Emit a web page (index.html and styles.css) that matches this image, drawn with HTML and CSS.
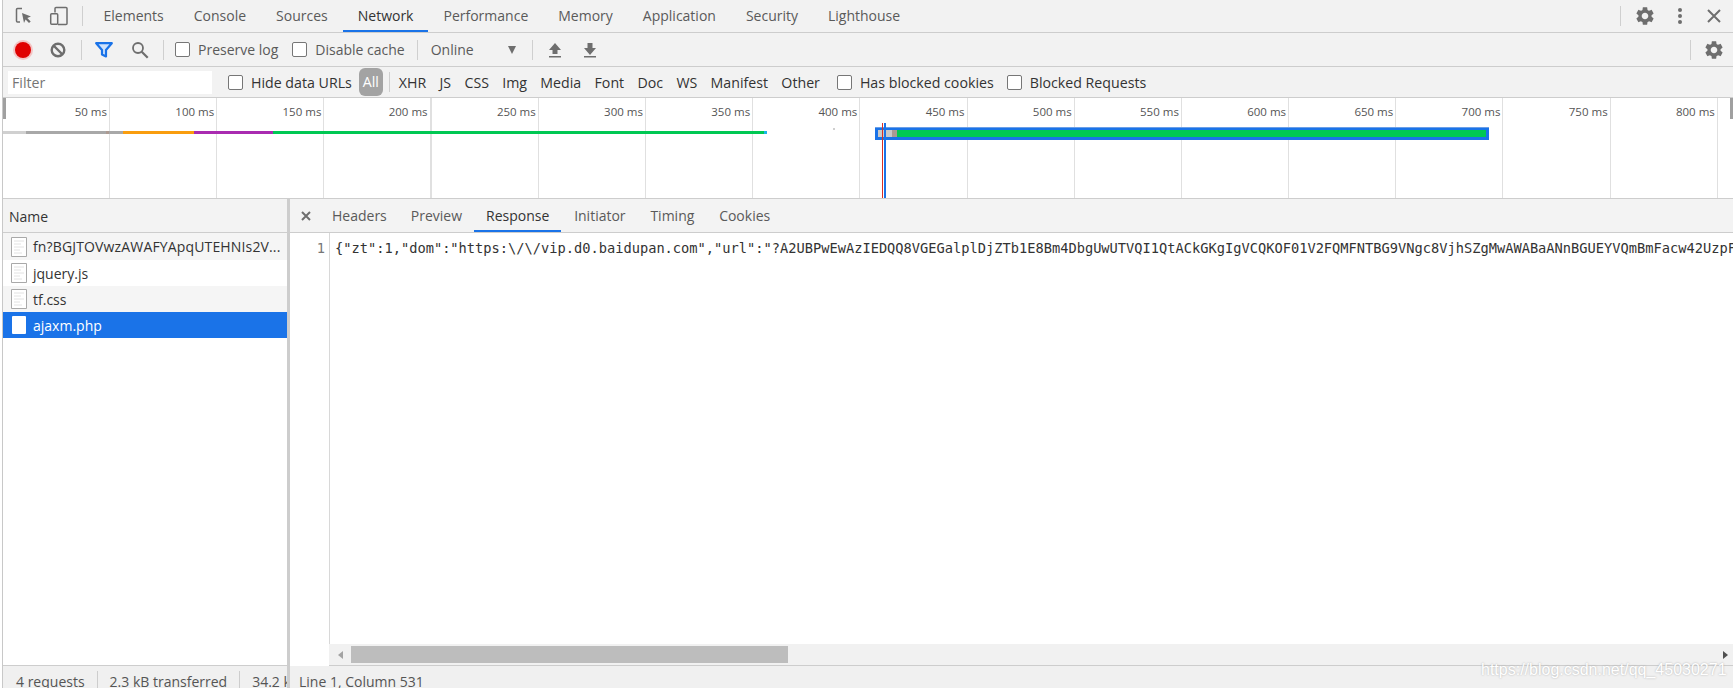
FILE: index.html
```html
<!DOCTYPE html>
<html lang="en">
<head>
	<meta charset="UTF-8">
	<title>DevTools</title>
	<link rel="stylesheet" href="styles.css">
</head>
<body>
	<svg class="defs" width="0" height="0">
		<symbol id="gear" viewBox="0 0 24 24"><path d="M19.14 12.94c.04-.3.06-.61.06-.94 0-.32-.02-.64-.07-.94l2.03-1.58c.18-.14.23-.41.12-.61l-1.92-3.32c-.12-.22-.37-.29-.59-.22l-2.39.96c-.5-.38-1.03-.7-1.62-.94l-.36-2.54c-.04-.24-.24-.41-.48-.41h-3.84c-.24 0-.43.17-.47.41l-.36 2.54c-.59.24-1.13.57-1.62.94l-2.39-.96c-.22-.08-.47 0-.59.22L2.74 8.87c-.12.21-.08.47.12.61l2.03 1.58c-.05.3-.09.63-.09.94s.02.64.07.94l-2.03 1.58c-.18.14-.23.41-.12.61l1.92 3.32c.12.22.37.29.59.22l2.39-.96c.5.38 1.03.7 1.62.94l.36 2.54c.05.24.24.41.48.41h3.84c.24 0 .44-.17.47-.41l.36-2.54c.59-.24 1.13-.56 1.62-.94l2.39.96c.22.08.47 0 .59-.22l1.92-3.32c.12-.22.07-.47-.12-.61l-2.01-1.58zM12 15.6c-1.98 0-3.6-1.62-3.6-3.6s1.62-3.6 3.6-3.6 3.6 1.62 3.6 3.6-1.62 3.6-3.6 3.6z"/></symbol>
		<symbol id="file" viewBox="0 0 16 20"><path d="M.5.5h15v19H.5z" fill="#fff" stroke="#a9a9a9"/><path d="M3 4h10M3 7h7M3 10h10M3 13h6M3 16h8" stroke="#e2e2e2"/></symbol>
	</svg>

	<div class="devtools">
		<div class="bar tabbar">
			<svg class="icon inspect" width="20" height="20" viewBox="0 0 20 20"><path d="M8 2.5H3.5a1 1 0 0 0-1 1V15a1 1 0 0 0 1 1H6" fill="none" stroke="#6e6e6e" stroke-width="1.5"/><path d="M8 7l9 3.6-3.7 1.3 3.4 3.6-1.7 1.6-3.4-3.6L10 17z" fill="#6e6e6e"/></svg>
			<svg class="icon device" width="20" height="20" viewBox="0 0 20 20"><path d="M6 6.5V2.5a1 1 0 0 1 1-1h10a1 1 0 0 1 1 1v15a1 1 0 0 1-1 1H9" fill="none" stroke="#6e6e6e" stroke-width="1.5"/><rect x="1.7" y="7.7" width="7" height="10.6" rx="1" fill="none" stroke="#6e6e6e" stroke-width="1.5"/></svg>
			<span class="divider top-div"></span>
			<div class="tabs">
				<span class="tab">Elements</span>
				<span class="tab">Console</span>
				<span class="tab">Sources</span>
				<span class="tab active">Network</span>
				<span class="tab">Performance</span>
				<span class="tab">Memory</span>
				<span class="tab">Application</span>
				<span class="tab">Security</span>
				<span class="tab">Lighthouse</span>
			</div>
			<div class="right-tools">
				<span class="divider"></span>
				<svg class="gear" width="22" height="22"><use href="#gear"/></svg>
				<svg class="dots" width="6" height="18" viewBox="0 0 6 18"><circle cx="3" cy="3" r="2"/><circle cx="3" cy="9" r="2"/><circle cx="3" cy="15" r="2"/></svg>
				<svg class="close-x" width="14" height="14" viewBox="0 0 14 14"><path d="M1 1l12 12M13 1L1 13" stroke="#6e6e6e" stroke-width="2"/></svg>
			</div>
		</div>

		<div class="bar toolbar">
			<span class="record"></span>
			<svg class="clear" width="16" height="16" viewBox="0 0 16 16"><circle cx="8" cy="8" r="6.3" fill="none" stroke="#6e6e6e" stroke-width="2.4"/><path d="M3.5 3.5l9 9" stroke="#6e6e6e" stroke-width="2.4"/></svg>
			<span class="divider d1"></span>
			<svg class="funnel" width="18" height="16" viewBox="0 0 18 16"><path d="M1.2 1.2h15.6L11 8v6.5L7 12.5V8z" fill="#cfe2fb" stroke="#1a73e8" stroke-width="2.2" stroke-linejoin="round"/></svg>
			<svg class="search" width="18" height="18" viewBox="0 0 18 18"><circle cx="7" cy="7" r="5" fill="none" stroke="#6e6e6e" stroke-width="1.8"/><path d="M10.7 10.7l6 6" stroke="#6e6e6e" stroke-width="2.2"/></svg>
			<span class="divider d2"></span>
			<label class="check preserve"><span class="box"></span>Preserve log</label>
			<label class="check cache"><span class="box"></span>Disable cache</label>
			<span class="divider d3"></span>
			<span class="online">Online</span>
			<span class="caret"></span>
			<span class="divider d4"></span>
			<svg class="arrow up" width="14" height="16" viewBox="0 0 14 16"><path d="M7 1l6 7H9.5v4h-5V8H1zM1 14h12v1.6H1z" fill="#6e6e6e"/></svg>
			<svg class="arrow down" width="14" height="16" viewBox="0 0 14 16"><path d="M4.5 1h5v5H13l-6 7-6-7h3.5zM1 14h12v1.6H1z" fill="#6e6e6e"/></svg>
			<div class="right-tools">
				<span class="divider"></span>
				<svg class="gear" width="22" height="22"><use href="#gear"/></svg>
			</div>
		</div>

		<div class="bar filterbar">
			<span class="filter-input">Filter</span>
			<label class="check hide-urls"><span class="box"></span>Hide data URLs</label>
			<span class="type-all">All</span>
			<span class="divider d5"></span>
			<span class="type">XHR</span>
			<span class="type">JS</span>
			<span class="type">CSS</span>
			<span class="type">Img</span>
			<span class="type">Media</span>
			<span class="type">Font</span>
			<span class="type">Doc</span>
			<span class="type">WS</span>
			<span class="type">Manifest</span>
			<span class="type">Other</span>
			<label class="check blocked-c"><span class="box"></span>Has blocked cookies</label>
			<label class="check blocked-r"><span class="box"></span>Blocked Requests</label>
		</div>

		<div class="timeline">
			<div class="grid">
				<div class="cell">50 ms</div>
				<div class="cell">100 ms</div>
				<div class="cell">150 ms</div>
				<div class="cell">200 ms</div>
				<div class="cell">250 ms</div>
				<div class="cell">300 ms</div>
				<div class="cell">350 ms</div>
				<div class="cell">400 ms</div>
				<div class="cell">450 ms</div>
				<div class="cell">500 ms</div>
				<div class="cell">550 ms</div>
				<div class="cell">600 ms</div>
				<div class="cell">650 ms</div>
				<div class="cell">700 ms</div>
				<div class="cell">750 ms</div>
				<div class="cell">800 ms</div>
			</div>
			<span class="handle left"></span>
			<span class="handle right"></span>
			<span class="seg s-light"></span>
			<span class="seg s-gray"></span>
			<span class="seg s-brown"></span>
			<span class="seg s-gray2"></span>
			<span class="seg s-orange"></span>
			<span class="seg s-purple"></span>
			<span class="seg s-green"></span>
			<span class="seg s-cyan"></span>
			<span class="speck"></span>
			<div class="selected">
				<span class="sel-light"></span>
				<span class="sel-brown"></span>
				<span class="sel-green"></span>
			</div>
			<span class="mark red"></span>
			<span class="mark blue"></span>
		</div>

		<div class="main">
			<div class="left-panel">
				<div class="name-head">Name</div>
				<div class="rows">
					<div class="row first odd"><svg class="file" width="16" height="20"><use href="#file"/></svg><span class="row-name">fn?BGJTOVwzAWAFYApqUTEHNIs2V...</span></div>
					<div class="row"><svg class="file" width="16" height="20"><use href="#file"/></svg><span class="row-name">jquery.js</span></div>
					<div class="row odd"><svg class="file" width="16" height="20"><use href="#file"/></svg><span class="row-name">tf.css</span></div>
					<div class="row picked"><span class="file-white"></span><span class="row-name">ajaxm.php</span></div>
				</div>
				<div class="status">
					<span class="stat">4 requests</span>
					<span class="stat">2.3 kB transferred</span>
					<span class="stat">34.2 k</span>
				</div>
			</div>
			<div class="right-panel">
				<div class="detail-tabs">
					<svg class="detail-x" width="10" height="10" viewBox="0 0 10 10"><path d="M1 1l8 8M9 1L1 9" stroke="#6e6e6e" stroke-width="2"/></svg>
					<span class="dtab">Headers</span>
					<span class="dtab">Preview</span>
					<span class="dtab active">Response</span>
					<span class="dtab">Initiator</span>
					<span class="dtab">Timing</span>
					<span class="dtab">Cookies</span>
				</div>
				<div class="code">
					<div class="gutter">1</div>
					<div class="source">{"zt":1,"dom":"https:\/\/vip.d0.baidupan.com","url":"?A2UBPwEwAzIEDQQ8VGEGalplDjZTb1E8Bm4DbgUwUTVQI1QtACkGKgIgVCQKOF01V2FQMFNTBG9VNgc8VjhSZgMwAWABaANnBGUEYVQmBmFacw42UzpF</div>
				</div>
				<div class="hscroll">
					<span class="sb-left"></span>
					<span class="sb-thumb"></span>
					<span class="sb-right"></span>
				</div>
				<div class="status pos">Line 1, Column 531</div>
			</div>
		</div>

		<div class="watermark">https://blog.csdn.net/qq_45030271</div>
	</div>
</body>
</html>
```

FILE: styles.css
```css
* { box-sizing: border-box; }
html, body { margin: 0; padding: 0; background: #fff; }
body { width: 1733px; height: 688px; overflow: hidden; font-family: "Open Sans", "Noto Sans", sans-serif; font-size: 14px; color: #444; }
.defs { position: absolute; }
svg { display: block; flex: none; }

.devtools { position: relative; width: 1733px; height: 688px; padding-left: 3px; display: flex; flex-direction: column; overflow: hidden; }
.devtools::before { content: ""; position: absolute; left: 2px; top: 0; bottom: 0; width: 1px; background: #c8c8c8; }

.bar { display: flex; align-items: center; background: #f2f2f2; border-bottom: 1px solid #cdcdcd; flex: none; }
.divider { display: block; width: 1px; height: 20px; background: #cfcfcf; flex: none; }
.right-tools { margin-left: auto; display: flex; align-items: center; }

/* main tabs */
.tabbar { height: 33px; }
.inspect { margin-left: 11px; }
.device { margin-left: 15px; }
.top-div { margin-left: 13px; }
.tabs { display: flex; height: 32px; margin-left: 5.5px; }
.tab { padding: 0 15px; line-height: 32px; color: #5a5a5a; }
.tab.active { color: #333; border-bottom: 2px solid #1a73e8; }
.tabbar .right-tools { padding-right: 12px; }
.tabbar .gear { margin-left: 13px; fill: #6e6e6e; }
.dots { margin-left: 21px; fill: #6e6e6e; }
.close-x { margin-left: 24px; }

/* toolbar */
.toolbar { height: 34px; }
.record { width: 16px; height: 16px; margin-left: 12px; border-radius: 50%; background: #e00000; box-shadow: 0 0 0 2px #f3c4c4; }
.clear { margin-left: 19px; }
.d1 { margin-left: 15px; }
.funnel { margin-left: 13px; }
.search { margin-left: 18px; }
.d2 { margin-left: 14px; }
.check { display: flex; align-items: center; color: #5a5a5a; }
.box { width: 15px; height: 15px; margin-right: 8px; background: #fff; border: 1px solid #767676; border-radius: 2px; flex: none; }
.preserve { margin-left: 11px; }
.cache { margin-left: 14px; }
.d3 { margin-left: 12px; }
.online { margin-left: 13px; color: #5a5a5a; }
.caret { margin-left: 34px; width: 0; height: 0; border-left: 4.5px solid transparent; border-right: 4.5px solid transparent; border-top: 8px solid #6e6e6e; }
.d4 { margin-left: 16px; }
.up { margin-left: 15px; }
.down { margin-left: 21px; }
.toolbar .right-tools { padding-right: 8px; }
.toolbar .gear { margin-left: 12px; fill: #6e6e6e; }

/* filter row */
.filterbar { height: 31px; color: #333; font-size: 14.2px; }
.filter-input { width: 204px; height: 23px; margin-left: 5px; padding-left: 4px; line-height: 23px; background: #fff; color: #757575; }
.hide-urls { margin-left: 16px; color: #333; }
.type-all { width: 24px; height: 28px; margin-left: 7px; line-height: 28px; text-align: center; background: #a3a3a3; border-radius: 6px; color: #fff; }
.d5 { margin-left: 6px; }
.type { margin-left: 13.3px; color: #333; }
.d5 + .type { margin-left: 9px; }
.blocked-c { margin-left: 17px; color: #333; }
.blocked-r { margin-left: 13px; color: #333; }

/* overview */
.timeline { position: relative; height: 101px; flex: none; background: #fff; border-bottom: 1px solid #cdcdcd; }
.grid { display: grid; grid-template-columns: 107px repeat(15, 107.2px); height: 100%; }
.cell { padding: 6px 2px 0 0; border-right: 1px solid #e0e0e0; text-align: right; font-size: 11.5px; line-height: 15px; color: #555; white-space: nowrap; }
.cell:nth-child(4) { border-right-width: 2px; }
.handle { position: absolute; top: 0; width: 3px; height: 21px; background: #a0a0a0; }
.handle.left { left: 0; }
.handle.right { right: 0; }
.seg { position: absolute; top: 33px; height: 3px; }
.s-light { left: 0; width: 23px; background: #d0d0d0; }
.s-gray { left: 23px; width: 80px; background: #a8a8a8; }
.s-brown { left: 103px; width: 3px; background: #ac9a92; }
.s-gray2 { left: 106px; width: 14px; background: #a8a8a8; }
.s-orange { left: 120px; width: 71px; background: #f99d0e; }
.s-purple { left: 191px; width: 79px; background: #a92bb0; }
.s-green { left: 270px; width: 491px; background: #00c853; }
.s-cyan { left: 761px; width: 3px; background: #1ab5e8; }
.speck { position: absolute; left: 830px; top: 30px; width: 2px; height: 2px; background: #cfcfcf; }
.selected { position: absolute; left: 872px; top: 29px; width: 614px; height: 13px; display: flex; padding: 2px 3px 3px; background: #1a73e8; border-top: 1px solid #6a9fe8; }
.sel-light { width: 14px; background: #c9c9c9; }
.sel-brown { width: 5px; background: #ab9a93; }
.sel-green { flex: 1; background: #00c853; }
.mark { position: absolute; top: 25px; bottom: 0; width: 1px; }
.mark.red { left: 879px; background: #d93025; }
.mark.blue { left: 881px; width: 2px; background: #1a73e8; }

/* panels */
.main { flex: 1; display: flex; min-height: 0; }
.left-panel { width: 287px; flex: none; display: flex; flex-direction: column; border-right: 3px solid #cdcdcd; }
.name-head { height: 34px; flex: none; padding-left: 6px; line-height: 35px; background: #f3f3f3; border-bottom: 1px solid #cdcdcd; color: #333; }
.rows { flex: 1; }
.row { display: flex; align-items: center; height: 26px; padding-left: 8px; color: #333; }
.row.first { height: 27px; }
.row.first .row-name { letter-spacing: .15px; }
.row.odd { background: #f5f5f5; }
.row.picked { background: #1a73e8; color: #fff; }
.file-white { width: 14px; height: 18px; margin-left: 1px; margin-right: 1px; background: #fff; border-radius: 1px; flex: none; }
.row-name { margin-left: 6px; white-space: nowrap; }

.right-panel { flex: 1; min-width: 0; display: flex; flex-direction: column; }
.detail-tabs { display: flex; align-items: center; height: 34px; flex: none; background: #f3f3f3; border-bottom: 1px solid #cdcdcd; }
.detail-x { margin-left: 11px; margin-right: 9px; }
.dtab { padding: 0 12px; height: 33px; line-height: 33px; color: #5a5a5a; }
.dtab:nth-child(n+5) { margin-left: .8px; }
.dtab.active { color: #333; border-bottom: 2px solid #1a73e8; }
.code { flex: 1; display: flex; min-height: 0; background: #fff; overflow: hidden; }
.gutter { width: 40px; flex: none; padding: 7px 4px 0 0; border-right: 1px solid #d8d8d8; text-align: right; font: 13.7px/16px "DejaVu Sans Mono", monospace; color: #777; }
.source { padding: 7px 0 0 5px; font: 13.7px/16px "DejaVu Sans Mono", monospace; color: #333; white-space: nowrap; }
.hscroll { height: 22px; flex: none; margin-left: 39px; display: flex; align-items: center; background: #f1f1f1; border-bottom: 1px solid #cdcdcd; }
.sb-left { margin-left: 9px; width: 0; height: 0; border-top: 4px solid transparent; border-bottom: 4px solid transparent; border-right: 5px solid #a3a3a3; }
.sb-thumb { margin-left: 8px; width: 437px; height: 17px; background: #bdbdbd; }
.sb-right { margin-left: auto; margin-right: 5px; width: 0; height: 0; border-top: 4.5px solid transparent; border-bottom: 4.5px solid transparent; border-left: 5px solid #505050; }

.status { height: 23px; flex: none; display: flex; align-items: flex-start; background: #f0f0f0; color: #555; white-space: nowrap; overflow: hidden; }
.stat { padding: 2px 12px 0; height: 30px; margin-top: 5px; border-right: 1px solid #cdcdcd; line-height: 18px; }
.left-panel .status { border-top: 1px solid #cdcdcd; }
.stat:first-child { padding-left: 13px; }
.stat:last-child { border-right: 0; padding-right: 0; }
.right-panel .status { height: 22px; padding: 6px 0 0 9px; line-height: 20px; }

.watermark { position: absolute; left: 1481px; top: 661px; font: 16px "Liberation Sans", sans-serif; color: #fff; text-shadow: 0 0 2px #aaa; white-space: nowrap; }
```
